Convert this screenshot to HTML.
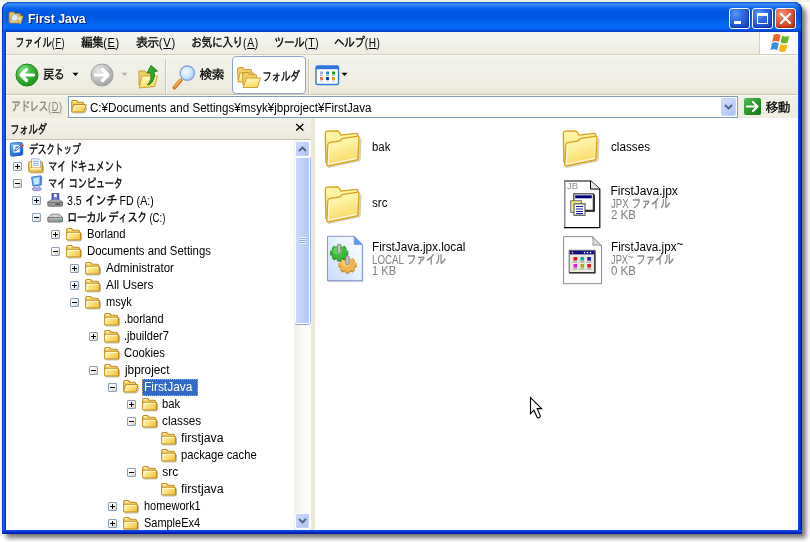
<!DOCTYPE html>
<html lang="ja"><head><meta charset="utf-8"><title>First Java</title>
<style>
html,body{margin:0;padding:0}
body{width:810px;height:542px;background:#fff;position:relative;overflow:hidden;font-family:"Liberation Sans","IPAGothic",sans-serif;font-size:12px;color:#000}
*{box-sizing:border-box}
.abs,.t,.bx,.ic,.sel{position:absolute}
.t{white-space:pre;transform-origin:0 0;display:block}
.t .j{font-size:13px;letter-spacing:-1px;-webkit-text-stroke:.3px currentColor}
.t .p{letter-spacing:.8px;margin-left:.5px}
.t .tl{position:relative;top:-3px}
.t u{text-decoration:underline;text-underline-offset:1px}
#shadow{left:2px;top:2px;width:800px;height:532px;border-radius:8px 8px 0 0;box-shadow:4px 4px 5px rgba(0,0,0,.55)}
#win{left:2px;top:2px;width:800px;height:532px;border-radius:8px 8px 0 0;background:#0a3bdc;overflow:hidden}
#title{left:0;top:0;width:800px;height:30px;background:linear-gradient(180deg,#0a4ed0 0%,#2a7cf4 4%,#3c8efc 8%,#2078f6 13%,#0864ec 21%,#0059e4 31%,#0056e2 50%,#025de9 62%,#0467f6 73%,#056afa 85%,#035fee 91%,#0148d0 96%,#0034b4 100%)}
#title:before{content:"";position:absolute;left:0;top:0;width:100%;height:100%;border-radius:8px 8px 0 0;box-shadow:inset 1px 0 0 rgba(0,40,170,.9),inset -1px 0 0 rgba(0,30,150,.9),inset 3px 0 2px rgba(60,130,255,.35),inset -3px 0 2px rgba(0,40,170,.35)}
#lb{left:0;top:30px;width:4px;height:502px;background:linear-gradient(90deg,#0831d9,#1660f0 35%,#0a45e0 70%,#0534c8)}
#rb{left:796px;top:30px;width:4px;height:502px;background:linear-gradient(90deg,#1650e6,#0838dc 40%,#0026c4 70%,#00138c)}
#bb{left:0;top:528px;width:800px;height:4px;background:linear-gradient(180deg,#1650e6,#0838dc 40%,#0026c4 70%,#00138c)}
#client{left:4px;top:30px;width:792px;height:498px;background:#ece9d8}
.cb{position:absolute;top:6px;width:21px;height:21px;border:1px solid #fff;border-radius:3px;background:radial-gradient(circle at 30% 25%,#5a96f5 0%,#2a62e0 45%,#1c4fd0 75%,#1640b8 100%);box-shadow:inset -1px -1px 2px rgba(0,20,120,.5)}
.cb.x{background:radial-gradient(circle at 30% 25%,#f0957a 0%,#e0603c 40%,#cf4322 75%,#b5300f 100%);box-shadow:inset -1px -1px 2px rgba(110,20,0,.5)}
#menu{left:0;top:0;width:792px;height:22px;background:linear-gradient(180deg,#f5f4f0,#f1f0e8 60%,#eeede3)}
#menuline{left:0;top:22px;width:792px;height:1px;background:#d6d0ba}
#logo{left:753px;top:0;width:39px;height:22px;background:#fff;border-left:1px solid #d6d0ba}
#tb{left:0;top:23px;width:792px;height:39px;background:linear-gradient(180deg,#fdfdfb 0,#f3f2ea 2px,#f0efe5 50%,#edebde 90%,#e8e5d5 100%)}
#tbline{left:0;top:62px;width:792px;height:1px;background:#cfc9b2}
#ab{left:0;top:63px;width:792px;height:23px;background:linear-gradient(180deg,#fdfdfb 0,#f1f0e6 2px,#efede0 100%)}
.sep{position:absolute;top:27px;width:2px;height:35px;border-left:1px solid #c9c5b2;border-right:1px solid #fbfaf6}
#fbtn{left:226px;top:24px;width:74px;height:38px;border:1px solid #8aa5c8;border-radius:4px;background:#fff}
#addr{left:62px;top:64px;width:670px;height:22px;border:1px solid #7f9db9;background:#fff}
#addrbtn{left:652px;top:1px;width:15px;height:18px;border-radius:2px;background:linear-gradient(135deg,#d5e1fb,#b9cdf8 60%,#aec4f4);border:1px solid #c4d3f8}
#fhead{left:0;top:86px;width:305px;height:22px;background:linear-gradient(180deg,#f3f2ea,#efede2 60%,#ebe9dc)}
#fheadline{left:0;top:107px;width:305px;height:1px;background:#c6c3b2}
#treebg{left:0;top:108px;width:288px;height:390px;background:#fff}
#sbar{left:288px;top:108px;width:17px;height:390px;background:linear-gradient(90deg,#f1efe7,#fbfaf6 50%,#fefefb)}
.sbtn{position:absolute;left:1px;width:15px;height:16px;border:1px solid #fff;border-radius:2px;background:linear-gradient(135deg,#d0defb,#bccef9 50%,#aec2f3);box-shadow:0 0 0 1px #c3d2f5 inset}
#thumb{left:1px;top:17px;width:15px;height:167px;border:1px solid #fff;border-radius:2px;background:linear-gradient(90deg,#cad9fd,#bdcffb 60%,#b3c6f6);box-shadow:0 1px 0 #8fa8e0, 1px 0 0 #9fb6e8}
#split{left:305px;top:86px;width:4px;height:412px;background:#ece9d8}
#right{left:309px;top:86px;width:483px;height:412px;background:#fff}
.bx{width:9px;height:9px;border:1px solid #8c9fb8;border-radius:1px;background:linear-gradient(135deg,#fff 30%,#d6d2c2)}
.bx i{position:absolute;background:#000}
.bx .h{left:1px;top:3px;width:5px;height:1px}
.bx .v{left:3px;top:1px;width:1px;height:5px}
.sel{background:#316ac5;outline:1px dotted #e0a060;outline-offset:-1px}
</style></head>
<body>
<svg width="0" height="0" style="position:absolute">
<defs>
<linearGradient id="gF" x1="0" y1="0" x2="1" y2="1"><stop offset="0" stop-color="#fff6c0"/><stop offset=".5" stop-color="#fbe38a"/><stop offset="1" stop-color="#edbd48"/></linearGradient>
<linearGradient id="gSm" x1="0" y1="0" x2="1" y2=".6"><stop offset="0" stop-color="#fff8c0"/><stop offset=".5" stop-color="#fce27c"/><stop offset="1" stop-color="#f4c648"/></linearGradient>
<linearGradient id="gDesk" x1="0" y1="0" x2=".7" y2="1"><stop offset="0" stop-color="#9cd2ff"/><stop offset=".5" stop-color="#3c8cec"/><stop offset="1" stop-color="#1454c4"/></linearGradient>
<linearGradient id="gFb" x1="0" y1="0" x2="0" y2="1"><stop offset="0" stop-color="#fff8cc"/><stop offset="1" stop-color="#f9dc78"/></linearGradient>
<linearGradient id="gBig" x1="0" y1="0" x2=".35" y2="1"><stop offset="0" stop-color="#fffbd2"/><stop offset=".45" stop-color="#fef09c"/><stop offset="1" stop-color="#fbda62"/></linearGradient>
<linearGradient id="gBigB" x1="0" y1="0" x2="0" y2="1"><stop offset="0" stop-color="#fff6aa"/><stop offset="1" stop-color="#fbe282"/></linearGradient>
<radialGradient id="gBack" cx=".35" cy=".3" r=".8"><stop offset="0" stop-color="#8be08b"/><stop offset=".45" stop-color="#3cb83c"/><stop offset="1" stop-color="#168a16"/></radialGradient>
<radialGradient id="gFwd" cx=".35" cy=".3" r=".8"><stop offset="0" stop-color="#e6e6e6"/><stop offset=".5" stop-color="#c4c4c4"/><stop offset="1" stop-color="#9c9c9c"/></radialGradient>
<radialGradient id="gLens" cx=".4" cy=".4" r=".7"><stop offset="0" stop-color="#f4fbff"/><stop offset=".6" stop-color="#c4e4fb"/><stop offset="1" stop-color="#8fc4ee"/></radialGradient>
<linearGradient id="gPage" x1="0" y1="1" x2="1" y2="0"><stop offset="0" stop-color="#c6dcff"/><stop offset=".6" stop-color="#eaf3ff"/><stop offset="1" stop-color="#ffffff"/></linearGradient>
<linearGradient id="gGo" x1="0" y1="0" x2="1" y2="1"><stop offset="0" stop-color="#5cc05c"/><stop offset=".5" stop-color="#2a9a2a"/><stop offset="1" stop-color="#107010"/></linearGradient>

<!-- small closed folder -->
<g id="i-f">
<path d="M1.6 14.9 H14 Q15.4 14.9 15.4 13.5 V7.5" fill="none" stroke="#5a4a20" stroke-width="1" opacity=".4"/>
<path d="M0.7 3.8 Q0.7 2.5 2 2.5 H4.8 Q5.8 2.5 6.4 3.3 L7 4.3 H12.2 Q13.4 4.3 13.4 5.5 V8 H0.7 Z" fill="#f8d973" stroke="#bf8c1c" stroke-width="1.1"/>
<path d="M1.8 3.6 H5" stroke="#fff6c8" stroke-width="1"/>
<path d="M0.7 7.2 Q0.7 6.2 1.7 6.2 H13.5 Q14.5 6.2 14.5 7.2 V13 Q14.5 14 13.5 14 H1.7 Q0.7 14 0.7 13 Z" fill="url(#gSm)" stroke="#bf8c1c" stroke-width="1.1"/>
<path d="M1.9 13 V7.4 H13.2" fill="none" stroke="#fffde0" stroke-width="1" opacity=".9"/>
</g>
<!-- small open folder -->
<g id="i-fo">
<path d="M1.6 13.9 H13 Q14 13.9 14.4 13 L15.9 8.3" fill="none" stroke="#5a4a20" stroke-width="1" opacity=".4"/>
<path d="M0.7 2.8 Q0.7 1.5 2 1.5 H4.8 Q5.8 1.5 6.4 2.3 L7 3.3 H11.4 Q12.6 3.3 12.6 4.5 V11 H0.7 Z" fill="#f4cf62" stroke="#bf8c1c" stroke-width="1.1"/>
<path d="M1.8 2.6 H5" stroke="#fff6c8" stroke-width="1"/>
<path d="M3.6 5.6 H14 Q15.3 5.6 14.9 6.8 L13.2 12.1 Q12.9 13 11.9 13 H1.5 Q0.4 13 0.8 12 L2.6 6.4 Q2.9 5.6 3.6 5.6 Z" fill="url(#gSm)" stroke="#bf8c1c" stroke-width="1.1"/>
<path d="M2 12 L3.7 6.8 H13.5" fill="none" stroke="#fffde0" stroke-width="1" opacity=".9"/>
</g>
<!-- desktop -->
<g id="i-desk">
<path d="M2.5 3.2 Q2.3 1.6 4 1.5 L12.6 0.9 Q14.6 0.8 14.7 2.6 L15 11.6 Q15 13.4 13.2 13.7 L4.6 14.6 Q2.8 14.8 2.6 13 Z" transform="translate(-1.2,.6)" fill="url(#gDesk)" stroke="#1858c0" stroke-width=".9"/>
<path d="M4.3 4.3 L10.6 3.8 L10.9 11.2 L4.6 11.8 Z" fill="#fff"/>
<path d="M5.6 10.2 L6.2 8 L10.6 4.2 L12 5.4 L7.6 9.4 Z" fill="#dfeaff" stroke="#204a9c" stroke-width=".8"/>
<path d="M6.2 6 H8.4" stroke="#204a9c" stroke-width=".9"/>
<circle cx="13.4" cy="4.6" r="1.3" fill="#e85020"/>
</g>
<!-- my documents -->
<g id="i-mydoc">
<path d="M2.6 14.9 H14 Q15.4 14.9 15.4 13.5 V7.5" fill="none" stroke="#5a4a20" stroke-width="1" opacity=".4"/>
<path d="M0.8 5.2 Q0.8 3.8 2.2 3.8 H13 Q14.5 3.8 14.5 5.2 V12.6 Q14.5 14 13 14 H2.2 Q0.8 14 0.8 12.6 Z" fill="url(#gSm)" stroke="#bf8c1c" stroke-width="1.1"/>
<path d="M3.6 0.8 H10.6 L12.4 2.6 V10.5 H3.6 Z" fill="#fff" stroke="#88a4d8" stroke-width=".9"/>
<path d="M5 3.2 H10.8 M5 5.2 H10.8 M5 7.2 H10.8" stroke="#7fa8e8" stroke-width="1.1"/>
<path d="M1.9 9.6 H13.4 V12.9 H1.9 Z" fill="#fbe289" stroke="#d4a630" stroke-width=".7"/>
<path d="M2.4 10.4 H13" stroke="#fffce0" stroke-width=".8"/>
</g>
<!-- my computer -->
<g id="i-mycomp">
<ellipse cx="8.8" cy="14" rx="4.8" ry="1.8" fill="#b4b4e4" stroke="#7a7ac4" stroke-width=".7"/>
<path d="M6.3 10.3 H11 L11.6 13.4 H5.8 Z" fill="#d0d0f0" stroke="#8a8ac8" stroke-width=".7"/>
<path d="M3.6 2.2 L12.6 0.8 L12.2 10 L5 11 Z" fill="#6cb8f8" stroke="#3f78d0" stroke-width="1"/>
<path d="M5.2 3.4 L11.4 2.4 L11.1 8.8 L6.2 9.6 Z" fill="#c4e6ff"/>
<path d="M12.6 0.8 L14 2 L13.5 10.6 L12.2 10 Z" fill="#4a86d8" stroke="#3f78d0" stroke-width=".5"/>
</g>
<!-- floppy drive -->
<g id="i-floppy">
<path d="M5 1.6 H11.8 V9.5 H5 Z" fill="#5868d8" stroke="#36409c" stroke-width=".9"/>
<rect x="7" y="1.9" width="2.8" height="3.4" fill="#eef0fa"/>
<rect x="6.4" y="6.6" width="4" height="2.9" fill="#8c98e8"/>
<path d="M0.8 10.2 L4 8 H13 L15.6 10.2 Z" fill="#dcdcdc" stroke="#686868" stroke-width=".8"/>
<path d="M0.8 10.2 H15.6 V13.4 Q15.6 14.2 14.8 14.2 H1.6 Q0.8 14.2 0.8 13.4 Z" fill="#9c9c9c" stroke="#585858" stroke-width=".8"/>
<rect x="8.4" y="11.6" width="5" height="1.1" fill="#303030"/>
<rect x="3" y="11.6" width="1.6" height="1" fill="#40c040"/>
</g>
<!-- disk -->
<g id="i-disk">
<path d="M0.8 8.8 L4.4 5.2 H12.4 L15.6 8.8 Z" fill="#dedede" stroke="#6c6c6c" stroke-width=".8"/>
<ellipse cx="8.3" cy="7" rx="3.8" ry="1.2" fill="#f2f2f2" stroke="#8a8a8a" stroke-width=".6"/>
<path d="M0.8 8.8 H15.6 V12 Q15.6 13 14.6 13 H1.8 Q0.8 13 0.8 12 Z" fill="#a0a0a0" stroke="#585858" stroke-width=".8"/>
<path d="M1.4 9.6 H15" stroke="#d8d8d8" stroke-width=".7"/>
<rect x="11.2" y="10.8" width="2.6" height="1" fill="#38b038"/>
</g>
<!-- big folder (origin = tile 48x48 box) -->
<g id="big-folder">
<path d="M8 43 L38.3 36.8 Q39.6 36.5 39.7 35.2 L40.6 14.5" fill="none" stroke="#7a6420" stroke-width="2" opacity=".3"/>
<path d="M5.3 10 Q5.3 7.3 7.6 7.2 L17.2 7 Q18.6 7 19.4 8.4 L20.9 11.1 L36.2 9.3 Q37.6 9.2 37.7 10.6 L37.9 14 L10 38 L5.9 38 Z" fill="url(#gBigB)" stroke="#d6a019" stroke-width="1.3" stroke-linejoin="round"/>
<path d="M9.4 18.7 L19 17.2 Q20.4 17 21.2 15.7 Q22 14.5 23.4 14.3 L38 12.2 Q39.1 12.1 39 13.3 L38 34.8 Q37.9 35.7 37 35.9 L8.2 41.8 Q6.8 42 6.8 40.6 L8 20.2 Q8.1 18.9 9.4 18.7 Z" fill="url(#gBig)" stroke="#d6a019" stroke-width="1.3" stroke-linejoin="round"/>
<path d="M9.3 20.4 L8.3 40.2 L36.6 34.4" fill="none" stroke="#fffdf0" stroke-width="1.1" opacity=".95"/>
<path d="M36.9 13.6 L36.1 34" fill="none" stroke="#fff3b8" stroke-width="1" opacity=".8"/>
</g>
</defs>
</svg>

<div class="abs" style="left:0;top:0;width:810px;height:2px;background:#f0efeb"></div><div class="abs" style="left:0;top:2px;width:2px;height:534px;background:#f5f4f0"></div>
<div id="shadow" class="abs"></div>
<div id="win" class="abs">
 <div id="title" class="abs"></div>
 <div id="lb" class="abs"></div><div id="rb" class="abs"></div><div id="bb" class="abs"></div>
 <!-- title icon -->
 <svg class="abs" style="left:6px;top:8px" width="17" height="16" viewBox="0 0 17 16">
  <path d="M1 3.5 Q1 2 2.5 2 H5.5 L7 3.5 H11.5 Q12.5 3.5 12.5 4.5 V12.5 H1 Z" fill="#f0c04a" stroke="#a87818" stroke-width=".8"/>
  <path d="M4 6 H15 L13 13 H1.5 Z" fill="#fadb7a" stroke="#b88a1e" stroke-width=".8"/>
  <circle cx="6.8" cy="7.8" r="3.4" fill="#d8f0ff" stroke="#9ab8e0" stroke-width="1"/>
  <path d="M9.3 10.3 L12.5 13.6" stroke="#e8a050" stroke-width="1.6"/>
 </svg>
 <div class="cb" style="left:727px"><i class="abs" style="left:4px;top:12px;width:7px;height:3px;background:#fff"></i></div>
 <div class="cb" style="left:750px"><i class="abs" style="left:4px;top:4px;width:11px;height:11px;border:1px solid #fff;border-top-width:3px"></i></div>
 <div class="cb x" style="left:773px"><svg class="abs" style="left:0;top:0" width="19" height="19" viewBox="0 0 19 19"><path d="M5 5 L14 14 M14 5 L5 14" stroke="#fff" stroke-width="2.2" stroke-linecap="round"/></svg></div>

 <div id="client" class="abs">
  <div id="menu" class="abs"></div><div id="menuline" class="abs"></div>
  <div id="logo" class="abs">
   <svg class="abs" style="left:8.5px;top:0px" width="22.5" height="20.5" viewBox="0 0 17.5 16.5">
    <path d="M3.5 2.2 Q6.3 0.8 9 2.4 L7.8 8 Q5 6.6 2.2 8 Z" fill="#f0632a"/>
    <path d="M10.2 2.9 Q13 4.4 16 3 L14.7 8.7 Q11.8 10 9 8.5 Z" fill="#6cb52f"/>
    <path d="M2 9 Q4.8 7.6 7.6 9.1 L6.4 14.6 Q3.6 13.2 0.8 14.6 Z" fill="#3f8ee6"/>
    <path d="M8.8 9.7 Q11.6 11.2 14.5 9.8 L13.2 15.5 Q10.3 16.8 7.5 15.3 Z" fill="#f6b914"/>
   </svg>
  </div>
  <div id="tb" class="abs"></div><div id="tbline" class="abs"></div>
  <div id="ab" class="abs"></div>
  <!-- toolbar icons -->
  <svg class="abs" style="left:8px;top:30px" width="26" height="26" viewBox="0 0 26 26">
   <circle cx="13" cy="13" r="11" fill="url(#gBack)" stroke="#1f8a1f" stroke-width="1"/>
   <path d="M19.5 13 H8 M12.5 7.5 L7 13 L12.5 18.5" fill="none" stroke="#fff" stroke-width="3.2" stroke-linecap="round" stroke-linejoin="round"/>
  </svg>
  <svg class="abs" style="left:66px;top:40px" width="7" height="5" viewBox="0 0 7 5"><path d="M.5 .8 H6.5 L3.5 4 Z" fill="#000"/></svg>
  <svg class="abs" style="left:83px;top:30px" width="26" height="26" viewBox="0 0 26 26">
   <circle cx="13" cy="13" r="11" fill="url(#gFwd)" stroke="#a0a0a0" stroke-width="1"/>
   <path d="M6.5 13 H18 M13.5 7.5 L19 13 L13.5 18.5" fill="none" stroke="#fff" stroke-width="3.2" stroke-linecap="round" stroke-linejoin="round"/>
  </svg>
  <svg class="abs" style="left:115px;top:40px" width="7" height="5" viewBox="0 0 7 5"><path d="M.5 .8 H6.5 L3.5 4 Z" fill="#b4b2a4"/></svg>
  <!-- up folder -->
  <svg class="abs" style="left:131px;top:30.5px" width="24" height="26" viewBox="0 0 24 26">
   <path d="M2 8 H8 L9.5 10 H17 V22 H2 Z" fill="#f3cf62" stroke="#c49628" stroke-width=".9"/>
   <path d="M5 13 H20.5 L17.5 23.5 L2.2 25 Z" fill="url(#gBig)" stroke="#c99a2a" stroke-width=".9"/>
   <path d="M10.5 21.5 Q15.5 17 13.5 9.5 L10 10 L14 2.5 L20.5 8 L17 8.7 Q19 17 12 22 Z" fill="#2faa2f" stroke="#157a15" stroke-width=".9" stroke-linejoin="round"/>
  </svg>
  <div class="sep" style="left:159px"></div>
  <!-- search -->
  <svg class="abs" style="left:164px;top:31px" width="28" height="28" viewBox="0 0 28 28">
   <path d="M10.5 17.5 L4.5 24.5" stroke="#c87a20" stroke-width="4" stroke-linecap="round"/>
   <path d="M10.3 17 L4.6 23.8" stroke="#f4a848" stroke-width="2" stroke-linecap="round"/>
   <circle cx="17.3" cy="10.2" r="7.2" fill="url(#gLens)" stroke="#88a4dc" stroke-width="1.4"/>
  </svg>
  <div id="fbtn" class="abs"></div>
  <!-- folders icon -->
  <svg class="abs" style="left:230px;top:33px" width="26" height="24" viewBox="0 0 26 24">
   <path d="M1.5 4 Q1.5 2.5 3 2.5 H7 L8.5 4.5 H14.5 Q15.5 4.5 15.5 5.5 V15 H2 Z" fill="#f3cf62" stroke="#c49628" stroke-width=".9"/>
   <path d="M4 8 H18 L16 17 H2 Z" fill="url(#gBig)" stroke="#c99a2a" stroke-width=".9"/>
   <path d="M6.5 9 Q6.5 7.5 8 7.5 H12 L13.5 9.5 H19.5 Q20.5 9.5 20.5 10.5 V20 H7 Z" fill="#f3cf62" stroke="#c49628" stroke-width=".9"/>
   <path d="M10.5 13 H24.5 L21.5 22.5 H7 Z" fill="url(#gBig)" stroke="#c99a2a" stroke-width=".9"/>
  </svg>
  <div class="sep" style="left:302px"></div>
  <!-- views icon -->
  <svg class="abs" style="left:309px;top:33px" width="25" height="21" viewBox="0 0 25 21">
   <rect x="1" y="1" width="22.5" height="18.5" rx="1.5" fill="#fff" stroke="#2e78e4" stroke-width="1.4"/>
   <rect x="1" y="1" width="22.5" height="3.2" fill="#2e78e4"/>
   <rect x="5" y="6.5" width="3" height="3" fill="#a4a4dc"/><rect x="11" y="6.5" width="3" height="3" fill="#2a84e8"/><rect x="17" y="6.5" width="3" height="3" fill="#1ea01e"/>
   <rect x="5" y="12" width="3" height="3" fill="#f07444"/><rect x="11" y="12" width="3" height="3" fill="#123a9c"/><rect x="17" y="12" width="3" height="3" fill="#d4a41c"/>
   <path d="M5 10.5 H8 M11 10.5 H14 M17 10.5 H20 M5 16 H8 M11 16 H14 M17 16 H20" stroke="#a8a8a8" stroke-width=".8"/>
  </svg>
  <svg class="abs" style="left:334.5px;top:40px" width="7" height="5" viewBox="0 0 7 5"><path d="M.5 .8 H6.5 L3.5 4 Z" fill="#000"/></svg>

  <!-- address -->
  <div id="addr" class="abs">
   <svg class="abs" style="left:1.5px;top:2px" width="16" height="17" viewBox="0 0 16 17"><use href="#i-fo"/></svg>
   <div id="addrbtn" class="abs"><svg class="abs" style="left:2px;top:5px" width="9" height="6" viewBox="0 0 9 6"><path d="M1 1 L4.5 4.5 L8 1" fill="none" stroke="#4d6185" stroke-width="1.8"/></svg></div>
  </div>
  <svg class="abs" style="left:737px;top:65px" width="19" height="19" viewBox="0 0 19 19">
   <rect x=".5" y=".5" width="18" height="18" rx="2.5" fill="url(#gGo)" stroke="#e8f0e0" stroke-width="1"/>
   <path d="M4 9.5 H14 M10 5 L14.5 9.5 L10 14" fill="none" stroke="#fff" stroke-width="2.2" stroke-linejoin="round" stroke-linecap="round"/>
  </svg>

  <!-- folder pane -->
  <div id="fhead" class="abs"></div><div id="fheadline" class="abs"></div>
  <svg class="abs" style="left:289px;top:90.5px" width="10" height="9" viewBox="0 0 10 9"><path d="M1.2 1 L8.3 7.5 M8.3 1 L1.2 7.5" stroke="#000" stroke-width="1.4"/></svg>
  <div id="treebg" class="abs"></div>
  <div id="sbar" class="abs">
   <div class="sbtn" style="top:1px"><svg class="abs" style="left:2px;top:4px" width="9" height="6" viewBox="0 0 9 6"><path d="M1 5 L4.5 1.5 L8 5" fill="none" stroke="#4d6185" stroke-width="1.8"/></svg></div>
   <div id="thumb" class="abs"><i class="abs" style="left:3px;top:79px;width:7px;height:7px;background:repeating-linear-gradient(180deg,#eef4fe 0,#eef4fe 1px,#8cb0f8 1px,#8cb0f8 2px)"></i></div>
   <div class="sbtn" style="top:373px"><svg class="abs" style="left:2px;top:4px" width="9" height="6" viewBox="0 0 9 6"><path d="M1 1 L4.5 4.5 L8 1" fill="none" stroke="#4d6185" stroke-width="1.8"/></svg></div>
  </div>
  <div id="split" class="abs"></div>
  <div id="right" class="abs"></div>
 </div>
</div>

<!-- tiles icons (page coordinates) -->
<svg class="abs" style="left:320px;top:124px" width="48" height="48" viewBox="0 0 48 48"><use href="#big-folder"/></svg>
<svg class="abs" style="left:558px;top:124px" width="48" height="48" viewBox="0 0 48 48"><use href="#big-folder"/></svg>
<svg class="abs" style="left:320px;top:180px" width="48" height="48" viewBox="0 0 48 48"><use href="#big-folder"/></svg>
<!-- jpx.local -->
<svg class="abs" style="left:320px;top:230px" width="48" height="56" viewBox="0 0 48 56">
 <path d="M8.2 7 H35 L43.2 15.5 V51.6 H8.2 Z" fill="#5a6290" opacity=".55"/>
 <path d="M7.5 6.3 H34.2 L42.3 14.6 V50.7 H7.5 Z" fill="url(#gPage)" stroke="#8898cc" stroke-width="1"/>
 <path d="M34.2 6.3 V14.6 H42.3 Z" fill="#4a9cf8" stroke="#8898cc" stroke-width=".8"/>
 <g transform="translate(27.5,34.6)">
  <g stroke="#b87a1c" stroke-width="4" fill="none"><path d="M0 -8 V8 M-9 0 H9 M-6.3 -5.6 L6.3 5.6 M6.3 -5.6 L-6.3 5.6" transform="translate(0,1)"/></g>
  <ellipse cx="0" cy="1" rx="7.2" ry="6.4" fill="#b87a1c"/>
  <g stroke="#efb044" stroke-width="3.6" fill="none"><path d="M0 -8 V8 M-9 0 H9 M-6.3 -5.6 L6.3 5.6 M6.3 -5.6 L-6.3 5.6"/></g>
  <ellipse cx="0" cy="0" rx="7.2" ry="6.4" fill="#f1b54c"/>
  <ellipse cx="-1.5" cy="-1.5" rx="4.5" ry="3.6" fill="#f8cd78" opacity=".8"/>
 </g>
 <g transform="translate(19.2,22.4)">
  <g stroke="#1e7e1e" stroke-width="4" fill="none"><path d="M0 -8 V8 M-9 0 H9 M-6.3 -5.6 L6.3 5.6 M6.3 -5.6 L-6.3 5.6" transform="translate(0,1)"/></g>
  <ellipse cx="0" cy="1" rx="7.2" ry="6.4" fill="#1e7e1e"/>
  <g stroke="#34b034" stroke-width="3.6" fill="none"><path d="M0 -8 V8 M-9 0 H9 M-6.3 -5.6 L6.3 5.6 M6.3 -5.6 L-6.3 5.6"/></g>
  <ellipse cx="0" cy="0" rx="7.2" ry="6.4" fill="#3cba3c"/>
  <ellipse cx="-1.5" cy="-1.5" rx="4.5" ry="3.6" fill="#6cd86c" opacity=".8"/>
 </g>
 <rect x="17.4" y="14.6" width="3.4" height="8.5" rx="1.2" fill="#c4c4c4" stroke="#6a6a6a" stroke-width=".6"/>
 <rect x="25.7" y="26" width="3.4" height="8.5" rx="1.2" fill="#c4c4c4" stroke="#6a6a6a" stroke-width=".6"/>
</svg>
<!-- jpx -->
<svg class="abs" style="left:558px;top:174px;will-change:transform" width="48" height="56" viewBox="0 0 48 56">
 <path d="M6.6 6.8 H32.5 L41.8 15 V53.7 H6.6 Z" fill="#fff" stroke="#000" stroke-width="1.2"/>
 <path d="M6.6 53 V6.8 H32.5" fill="none" stroke="#909090" stroke-width="1.2"/>
 <path d="M32.5 6.8 V15 H41.8" fill="#e4e4e4" stroke="#000" stroke-width="1"/>
 <text x="9" y="15.4" font-family="Liberation Sans, sans-serif" font-size="9.5" fill="#8c8c8c">JB</text>
 <rect x="15.8" y="19.8" width="19.5" height="16.5" fill="#fff" stroke="#404040" stroke-width="1.2"/>
 <path d="M16 37.2 H36.2 V20.5" fill="none" stroke="#000" stroke-width="1.2"/>
 <rect x="17.2" y="21.3" width="16.6" height="3" fill="#000080"/>
 <rect x="12.8" y="26.8" width="10.5" height="11.5" fill="#f4f4c0" stroke="#606060" stroke-width="1"/>
 <path d="M13.5 27.8 H22.5 M13.8 28 V37.5" fill="none" stroke="#e8d820" stroke-width="1.4" stroke-dasharray="1.5 1.2"/>
 <rect x="16" y="29.8" width="11" height="11.5" fill="#fff" stroke="#404040" stroke-width="1"/>
 <path d="M18 32.5 H25 M18 35 H25 M18 37.5 H25 M18 39.6 H25" stroke="#2020a0" stroke-width="1.2"/>
</svg>
<!-- jpx~ -->
<svg class="abs" style="left:558px;top:230px" width="48" height="56" viewBox="0 0 48 56">
 <path d="M5.6 6.6 H34.5 L43.5 15.5 V53.7 H5.6 Z" fill="#fff" stroke="#8c8c8c" stroke-width="1"/>
 <path d="M34.5 6.6 Q35.5 12 34.8 15.2 Q39 14.6 43.5 15.5 Z" fill="#d8d8d8" stroke="#8c8c8c" stroke-width=".8"/>
 <rect x="11.2" y="20.3" width="25.4" height="22.3" fill="#eceadc" stroke="#606060" stroke-width="1"/>
 <path d="M11.2 42.8 H37 V20.5" fill="none" stroke="#202020" stroke-width="1.2"/>
 <rect x="11.8" y="20.8" width="24.4" height="3.6" fill="#10108c"/>
 <circle cx="14.5" cy="22.6" r=".9" fill="#f0c020"/><circle cx="26.5" cy="22.6" r=".8" fill="#fff"/><circle cx="29.5" cy="22.6" r=".8" fill="#fff"/><circle cx="32.5" cy="22.6" r=".8" fill="#fff"/>
 <rect x="15.5" y="27" width="3.6" height="3.6" fill="#e01818"/><rect x="22.5" y="27" width="3.6" height="3.6" fill="#18a8a8"/><rect x="29.3" y="27" width="3.6" height="3.6" fill="#1818e0"/>
 <rect x="15.5" y="34" width="3.6" height="3.6" fill="#e018e0"/><rect x="22.5" y="34" width="3.6" height="3.6" fill="#a8a810"/><rect x="29.3" y="34" width="3.6" height="3.6" fill="#e01818"/>
 <path d="M14.5 32 H19.5 M21.5 32 H26.5 M28.5 32 H33.5 M14.5 39 H19.5 M21.5 39 H26.5 M28.5 39 H33.5" stroke="#909090" stroke-width=".9"/>
</svg>

<svg class="ic" style="left:9px;top:141px" width="16" height="17" viewBox="0 0 16 17"><use href="#i-desk"/></svg>
<div class="bx" style="left:13px;top:162px"><i class="h"></i><i class="v"></i></div>
<svg class="ic" style="left:28px;top:158px" width="16" height="17" viewBox="0 0 16 17"><use href="#i-mydoc"/></svg>
<div class="bx" style="left:13px;top:179px"><i class="h"></i></div>
<svg class="ic" style="left:28px;top:175px" width="16" height="17" viewBox="0 0 16 17"><use href="#i-mycomp"/></svg>
<div class="bx" style="left:32px;top:196px"><i class="h"></i><i class="v"></i></div>
<svg class="ic" style="left:47px;top:192px" width="16" height="17" viewBox="0 0 16 17"><use href="#i-floppy"/></svg>
<div class="bx" style="left:32px;top:213px"><i class="h"></i></div>
<svg class="ic" style="left:47px;top:209px" width="16" height="17" viewBox="0 0 16 17"><use href="#i-disk"/></svg>
<div class="bx" style="left:51px;top:230px"><i class="h"></i><i class="v"></i></div>
<svg class="ic" style="left:66px;top:226px" width="16" height="17" viewBox="0 0 16 17"><use href="#i-f"/></svg>
<div class="bx" style="left:51px;top:247px"><i class="h"></i></div>
<svg class="ic" style="left:66px;top:243px" width="16" height="17" viewBox="0 0 16 17"><use href="#i-f"/></svg>
<div class="bx" style="left:70px;top:264px"><i class="h"></i><i class="v"></i></div>
<svg class="ic" style="left:85px;top:260px" width="16" height="17" viewBox="0 0 16 17"><use href="#i-f"/></svg>
<div class="bx" style="left:70px;top:281px"><i class="h"></i><i class="v"></i></div>
<svg class="ic" style="left:85px;top:277px" width="16" height="17" viewBox="0 0 16 17"><use href="#i-f"/></svg>
<div class="bx" style="left:70px;top:298px"><i class="h"></i></div>
<svg class="ic" style="left:85px;top:294px" width="16" height="17" viewBox="0 0 16 17"><use href="#i-f"/></svg>
<svg class="ic" style="left:104px;top:311px" width="16" height="17" viewBox="0 0 16 17"><use href="#i-f"/></svg>
<div class="bx" style="left:89px;top:332px"><i class="h"></i><i class="v"></i></div>
<svg class="ic" style="left:104px;top:328px" width="16" height="17" viewBox="0 0 16 17"><use href="#i-f"/></svg>
<svg class="ic" style="left:104px;top:345px" width="16" height="17" viewBox="0 0 16 17"><use href="#i-f"/></svg>
<div class="bx" style="left:89px;top:366px"><i class="h"></i></div>
<svg class="ic" style="left:104px;top:362px" width="16" height="17" viewBox="0 0 16 17"><use href="#i-f"/></svg>
<div class="bx" style="left:108px;top:383px"><i class="h"></i></div>
<svg class="ic" style="left:123px;top:379px" width="16" height="17" viewBox="0 0 16 17"><use href="#i-fo"/></svg>
<div class="sel" style="left:142px;top:379px;width:56px;height:17px"></div>
<div class="bx" style="left:127px;top:400px"><i class="h"></i><i class="v"></i></div>
<svg class="ic" style="left:142px;top:396px" width="16" height="17" viewBox="0 0 16 17"><use href="#i-f"/></svg>
<div class="bx" style="left:127px;top:417px"><i class="h"></i></div>
<svg class="ic" style="left:142px;top:413px" width="16" height="17" viewBox="0 0 16 17"><use href="#i-f"/></svg>
<svg class="ic" style="left:161px;top:430px" width="16" height="17" viewBox="0 0 16 17"><use href="#i-f"/></svg>
<svg class="ic" style="left:161px;top:447px" width="16" height="17" viewBox="0 0 16 17"><use href="#i-f"/></svg>
<div class="bx" style="left:127px;top:468px"><i class="h"></i></div>
<svg class="ic" style="left:142px;top:464px" width="16" height="17" viewBox="0 0 16 17"><use href="#i-f"/></svg>
<svg class="ic" style="left:161px;top:481px" width="16" height="17" viewBox="0 0 16 17"><use href="#i-f"/></svg>
<div class="bx" style="left:108px;top:502px"><i class="h"></i><i class="v"></i></div>
<svg class="ic" style="left:123px;top:498px" width="16" height="17" viewBox="0 0 16 17"><use href="#i-f"/></svg>
<div class="bx" style="left:108px;top:519px"><i class="h"></i><i class="v"></i></div>
<svg class="ic" style="left:123px;top:515px" width="16" height="17" viewBox="0 0 16 17"><use href="#i-f"/></svg>
<div id="labels" class="abs" style="left:0;top:0;width:810px;height:542px;will-change:transform">
<span class="t" id="t0" style="left:14.5px;top:34px;line-height:17px;font-size:12px;transform:scaleX(0.7576)"><span class="j">ファイル</span><span class="p">(<u>F</u>)</span></span>
<span class="t" id="t1" style="left:80.5px;top:34px;line-height:17px;font-size:12px;transform:scaleX(0.9070)"><span class="j">編集</span><span class="p">(<u>E</u>)</span></span>
<span class="t" id="t2" style="left:135.5px;top:34px;line-height:17px;font-size:12px;transform:scaleX(0.9302)"><span class="j">表示</span><span class="p">(<u>V</u>)</span></span>
<span class="t" id="t3" style="left:190.5px;top:34px;line-height:17px;font-size:12px;transform:scaleX(0.8608)"><span class="j">お気に入り</span><span class="p">(<u>A</u>)</span></span>
<span class="t" id="t4" style="left:273.5px;top:34px;line-height:17px;font-size:12px;transform:scaleX(0.8333)"><span class="j">ツール</span><span class="p">(<u>T</u>)</span></span>
<span class="t" id="t5" style="left:333.5px;top:34px;line-height:17px;font-size:12px;transform:scaleX(0.8393)"><span class="j">ヘルプ</span><span class="p">(<u>H</u>)</span></span>
<span class="t" id="t6" style="left:42.5px;top:66px;line-height:17px;font-size:12px;transform:scaleX(0.8750)"><span class="j">戻る</span></span>
<span class="t" id="t7" style="left:199.5px;top:66px;line-height:17px;font-size:12px;transform:scaleX(1.0000)"><span class="j">検索</span></span>
<span class="t" id="t8" style="left:262px;top:67.5px;line-height:17px;font-size:12px;transform:scaleX(0.7812)"><span class="j">フォルダ</span></span>
<span class="t" id="t9" style="left:10.5px;top:97.5px;line-height:17px;font-size:12px;color:#858370;transform:scaleX(0.7647)"><span class="j">アドレス</span><span class="p">(<u>D</u>)</span></span>
<span class="t" id="t10" style="left:89.5px;top:99.5px;line-height:17px;font-size:12px;transform:scaleX(0.9656)">C:¥Documents and Settings¥msyk¥jbproject¥FirstJava</span>
<span class="t" id="t11" style="left:765.5px;top:98.5px;line-height:17px;font-size:12px;transform:scaleX(1.0000)"><span class="j">移動</span></span>
<span class="t" id="t12" style="left:10px;top:120.7px;line-height:17px;font-size:12px;transform:scaleX(0.7604)"><span class="j">フォルダ</span></span>
<span class="t" id="t13" style="left:29.3px;top:140.5px;line-height:17px;font-size:12px;transform:scaleX(0.7111)"><span class="j">デスクトップ</span></span>
<span class="t" id="t14" style="left:48.3px;top:157.5px;line-height:17px;font-size:12px;transform:scaleX(0.7495)"><span class="j">マイ</span> <span class="j">ドキュメント</span></span>
<span class="t" id="t15" style="left:48.3px;top:174.5px;line-height:17px;font-size:12px;transform:scaleX(0.7495)"><span class="j">マイ</span> <span class="j">コンピュータ</span></span>
<span class="t" id="t16" style="left:67.3px;top:191.5px;line-height:17px;font-size:12px;transform:scaleX(0.8847)">3.5 <span class="j">インチ</span> FD (A:)</span>
<span class="t" id="t17" style="left:67.3px;top:208.5px;line-height:17px;font-size:12px;transform:scaleX(0.8024)"><span class="j">ローカル</span> <span class="j">ディスク</span> (C:)</span>
<span class="t" id="t18" style="left:87.3px;top:225.5px;line-height:17px;font-size:12px;transform:scaleX(0.9317)">Borland</span>
<span class="t" id="t19" style="left:87.3px;top:242.5px;line-height:17px;font-size:12px;transform:scaleX(0.9481)">Documents and Settings</span>
<span class="t" id="t20" style="left:106.3px;top:259.5px;line-height:17px;font-size:12px;transform:scaleX(0.9606)">Administrator</span>
<span class="t" id="t21" style="left:106.3px;top:276.5px;line-height:17px;font-size:12px;transform:scaleX(0.9896)">All Users</span>
<span class="t" id="t22" style="left:106.3px;top:293.5px;line-height:17px;font-size:12px;transform:scaleX(0.9214)">msyk</span>
<span class="t" id="t23" style="left:124.3px;top:310.5px;line-height:17px;font-size:12px;transform:scaleX(0.9116)">.borland</span>
<span class="t" id="t24" style="left:124.3px;top:327.5px;line-height:17px;font-size:12px;transform:scaleX(0.9224)">.jbuilder7</span>
<span class="t" id="t25" style="left:124.3px;top:344.5px;line-height:17px;font-size:12px;transform:scaleX(0.9442)">Cookies</span>
<span class="t" id="t26" style="left:124.8px;top:361.5px;line-height:17px;font-size:12px;transform:scaleX(0.9800)">jbproject</span>
<span class="t" id="t27" style="left:144.3px;top:378.5px;line-height:17px;font-size:12px;color:#fff;transform:scaleX(0.9939)">FirstJava</span>
<span class="t" id="t28" style="left:162.3px;top:395.5px;line-height:17px;font-size:12px;transform:scaleX(0.9368)">bak</span>
<span class="t" id="t29" style="left:162.3px;top:412.5px;line-height:17px;font-size:12px;transform:scaleX(0.9800)">classes</span>
<span class="t" id="t30" style="left:181.3px;top:429.5px;line-height:17px;font-size:12px;transform:scaleX(1.0293)">firstjava</span>
<span class="t" id="t31" style="left:181.3px;top:446.5px;line-height:17px;font-size:12px;transform:scaleX(0.9370)">package cache</span>
<span class="t" id="t32" style="left:162.3px;top:463.5px;line-height:17px;font-size:12px;transform:scaleX(1.0000)">src</span>
<span class="t" id="t33" style="left:181.3px;top:480.5px;line-height:17px;font-size:12px;transform:scaleX(1.0293)">firstjava</span>
<span class="t" id="t34" style="left:143.8px;top:497.5px;line-height:17px;font-size:12px;transform:scaleX(0.9145)">homework1</span>
<span class="t" id="t35" style="left:143.8px;top:514.5px;line-height:17px;font-size:12px;transform:scaleX(0.9131)">SampleEx4</span>
<span class="t" id="t36" style="left:372.3px;top:138.5px;line-height:17px;font-size:12px;transform:scaleX(0.9474)">bak</span>
<span class="t" id="t37" style="left:610.5px;top:138.5px;line-height:17px;font-size:12px;transform:scaleX(0.9750)">classes</span>
<span class="t" id="t38" style="left:372.3px;top:194.5px;line-height:17px;font-size:12px;transform:scaleX(0.9688)">src</span>
<span class="t" id="t39" style="left:610.5px;top:182.5px;line-height:17px;font-size:12px;transform:scaleX(1.0000)">FirstJava.jpx</span>
<span class="t" id="t40" style="left:610.5px;top:194.5px;line-height:17px;font-size:12px;color:#808080;transform:scaleX(0.8014)">JPX <span class="j">ファイル</span></span>
<span class="t" id="t41" style="left:610.5px;top:206.5px;line-height:17px;font-size:12px;color:#808080;transform:scaleX(0.9615)">2 KB</span>
<span class="t" id="t42" style="left:372.3px;top:238.5px;line-height:17px;font-size:12px;transform:scaleX(0.9789)">FirstJava.jpx.local</span>
<span class="t" id="t43" style="left:372.3px;top:250.5px;line-height:17px;font-size:12px;color:#808080;transform:scaleX(0.8111)">LOCAL <span class="j">ファイル</span></span>
<span class="t" id="t44" style="left:372.3px;top:262.5px;line-height:17px;font-size:12px;color:#808080;transform:scaleX(0.9231)">1 KB</span>
<span class="t" id="t45" style="left:610.5px;top:238.5px;line-height:17px;font-size:12px;transform:scaleX(0.9730)">FirstJava.jpx<span class="tl">~</span></span>
<span class="t" id="t46" style="left:610.5px;top:250.5px;line-height:17px;font-size:12px;color:#808080;transform:scaleX(0.7750)">JPX<span class="tl">~</span> <span class="j">ファイル</span></span>
<span class="t" id="t47" style="left:610.5px;top:262.5px;line-height:17px;font-size:12px;color:#808080;transform:scaleX(0.9615)">0 KB</span>
<span class="t" id="t48" style="left:28.4px;top:10px;line-height:17px;font-size:13px;color:#fff;font-weight:bold;text-shadow:1px 1px 0 #0a1883;transform:scaleX(0.9508)">First Java</span>
</div>
<!-- mouse cursor -->
<svg class="abs" style="left:528px;top:395px" width="18" height="26" viewBox="528 395 18 26"><path d="M530.5 397.6 V413.6 L534 410.2 L537.2 417.4 Q537.9 418.4 539.3 417.6 Q540.8 416.8 540.3 415.7 L537.2 408.6 H541.6 Z" fill="#fff" stroke="#000" stroke-width="1.1" stroke-linejoin="miter"/></svg>
</body></html>
